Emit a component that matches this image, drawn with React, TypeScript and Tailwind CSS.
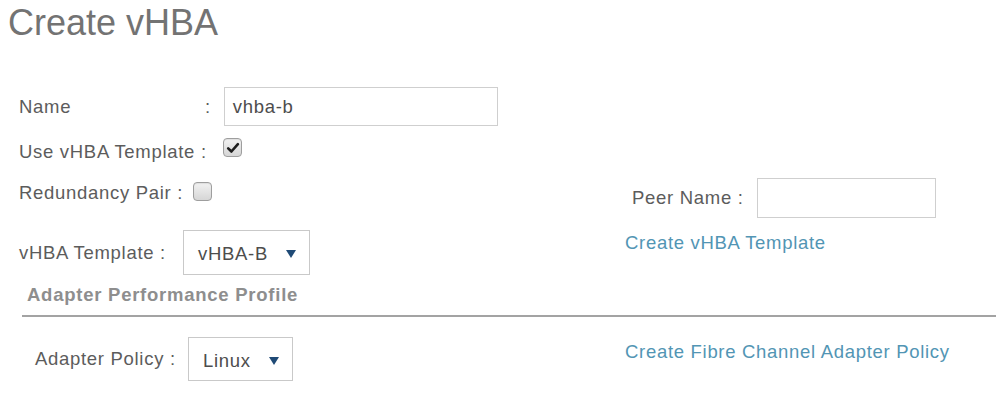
import React from "react";

function Checkbox({ checked }: { checked?: boolean }) {
  return (
    <span className="flex h-[19px] w-[19px] items-center justify-center rounded-[4px] border border-[#9e9e9e] bg-gradient-to-b from-[#f2f2f2] to-[#d6d6d6] shadow-[inset_0_1px_1px_rgba(0,0,0,0.08)]">
      {checked ? (
        <svg viewBox="0 0 16 16" className="h-[14px] w-[14px]">
          <path d="M2.5 8.4 L6.2 12 L13.6 3.6" fill="none" stroke="#1e1e1e" strokeWidth="3" strokeLinecap="round" strokeLinejoin="round" />
        </svg>
      ) : null}
    </span>
  );
}

function Select({ value, width }: { value: string; width: string }) {
  return (
    <div className={`flex h-full items-center justify-between border border-[#c9c9c9] bg-white pl-[14px] pr-[13px] pt-[3px] text-[#4d4d4d] ${width}`}>
      <span>{value}</span>
      <svg viewBox="0 0 10 8" className="h-[8px] w-[10px]">
        <path d="M0 0 H10 L5 8 Z" fill="#1f4a76" />
      </svg>
    </div>
  );
}

export default function App() {
  return (
    <div className="h-[415px] w-[996px] overflow-hidden bg-white font-['Liberation_Sans',Arial,sans-serif] text-[18.5px] tracking-[0.7px] text-[#5c5c5c]">
      <h1 className="pl-[8px] pt-[5px] text-[36px] leading-[36px] tracking-normal text-[#737373]">Create vHBA</h1>

      <div className="mt-[46px] flex h-[39px] items-center pl-[19px]">
        <span className="w-[186px]">Name</span>
        <span>:</span>
        <div className="ml-[13px] flex h-full w-[274px] items-center border border-[#cfcfcf] pl-[8px] text-[#4d4d4d]">vhba-b</div>
      </div>

      <div className="mt-[12px] flex h-[28px] items-start pl-[19px]">
        <span className="w-[204px] leading-[28px]">Use vHBA Template :</span>
        <Checkbox checked />
      </div>

      <div className="mt-[12px] flex h-[40px] items-start pl-[19px]">
        <div className="flex w-[613px] items-start">
          <span className="w-[174px] leading-[29px]">Redundancy Pair :</span>
          <span className="mt-[4px]">
            <Checkbox />
          </span>
        </div>
        <span className="w-[125px] self-center">Peer Name :</span>
        <div className="h-full w-[179px] border border-[#cfcfcf]" />
      </div>

      <div className="mt-[12px] flex h-[45px] items-start pl-[19px]">
        <div className="flex h-full w-[606px] items-center">
          <span className="w-[164px]">vHBA Template :</span>
          <Select value="vHBA-B" width="w-[127px]" />
        </div>
        <a className="leading-[26px] text-[#5295b4]">Create vHBA Template</a>
      </div>

      <div className="mt-[8px] pl-[27px] text-[18.5px] font-bold leading-[24px] tracking-[0.75px] text-[#8e8e8e]">
        Adapter Performance Profile
      </div>

      <div className="ml-[22px] mt-[8px] h-[2px] bg-[#a3a3a3]" />

      <div className="mt-[20px] flex h-[44px] items-start">
        <div className="flex h-full w-[625px] items-center pl-[35px]">
          <span className="w-[153px]">Adapter Policy :</span>
          <Select value="Linux" width="w-[105px]" />
        </div>
        <a className="leading-[30px] text-[#5295b4]">Create Fibre Channel Adapter Policy</a>
      </div>
    </div>
  );
}
